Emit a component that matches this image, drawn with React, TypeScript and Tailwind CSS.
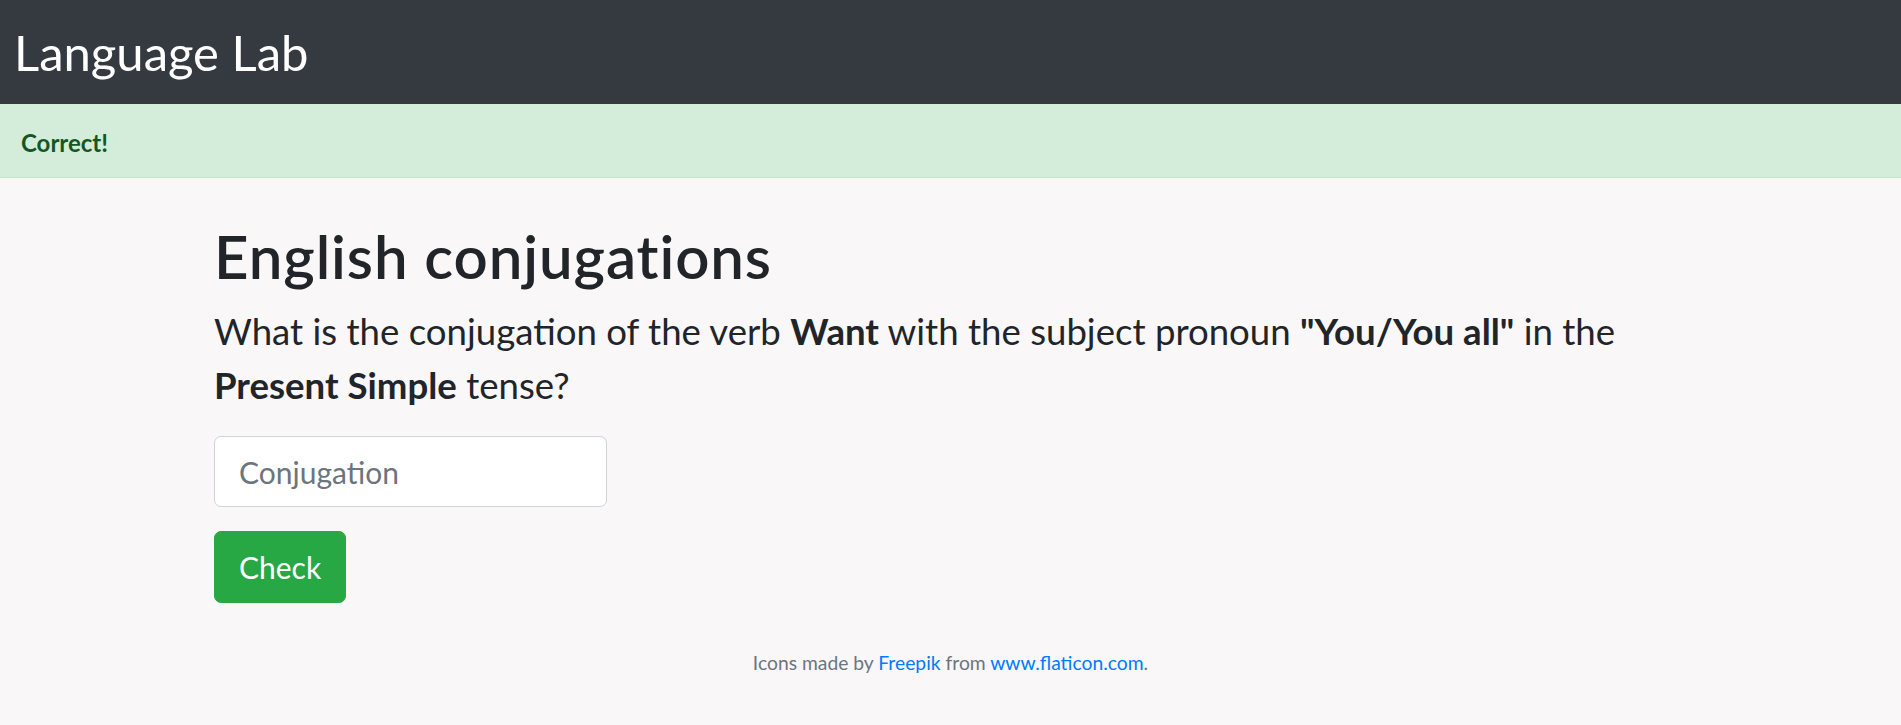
import React, { useState } from "react";

const font = { fontFamily: "Lato, 'Open Sans', sans-serif" };

function Navbar() {
  return (
    <nav className="h-[104px] bg-[#343a40] flex items-center pl-[14px]">
      <span className="text-white text-[49px] leading-none">Language Lab</span>
    </nav>
  );
}

function Alert() {
  return (
    <div className="h-[74px] bg-[#d4edda] border-b border-[#c3e6cb] flex items-center pl-[21px] pt-[4px]">
      <span className="text-[#155724] font-bold text-[24px]">Correct!</span>
    </div>
  );
}

function App() {
  const [answer, setAnswer] = useState("");
  return (
    <div className="min-h-[725px] bg-[#f9f7f8] text-[#212529]" style={font}>
      <Navbar />
      <Alert />
      <main className="pl-[214px] pr-[214px] pt-[42px]">
        <h1 className="text-[60px] leading-[1.2] font-semibold tracking-[0.9px] mb-[12px]">English conjugations</h1>
        <p className="text-[36.6px] leading-[54px] mb-[24px]">
          What is the conjugation of the verb <b>Want</b> with the subject pronoun <b>"You/You all"</b> in the <b>Present Simple</b> tense?
        </p>
        <input
          value={answer}
          onChange={(e) => setAnswer(e.target.value)}
          placeholder="Conjugation"
          className="block w-[393px] h-[71px] bg-white border-[1.5px] border-[#ced4da] rounded-[7px] px-[24px] text-[30px] placeholder:text-[#6c757d] outline-none mb-[24px]"
        />
        <button className="h-[72px] px-[24px] bg-[#28a745] text-white text-[30px] rounded-[7px] border border-[#28a745]">
          Check
        </button>
      </main>
      <footer className="text-center text-[19.3px] leading-[1.5] text-[#6c757d] pt-[46px] pb-[30px]">
        Icons made by <a href="#" className="text-[#007bff]">Freepik</a> from{" "}
        <a href="#" className="text-[#007bff]">www.flaticon.com</a>.
      </footer>
    </div>
  );
}

export default App;
